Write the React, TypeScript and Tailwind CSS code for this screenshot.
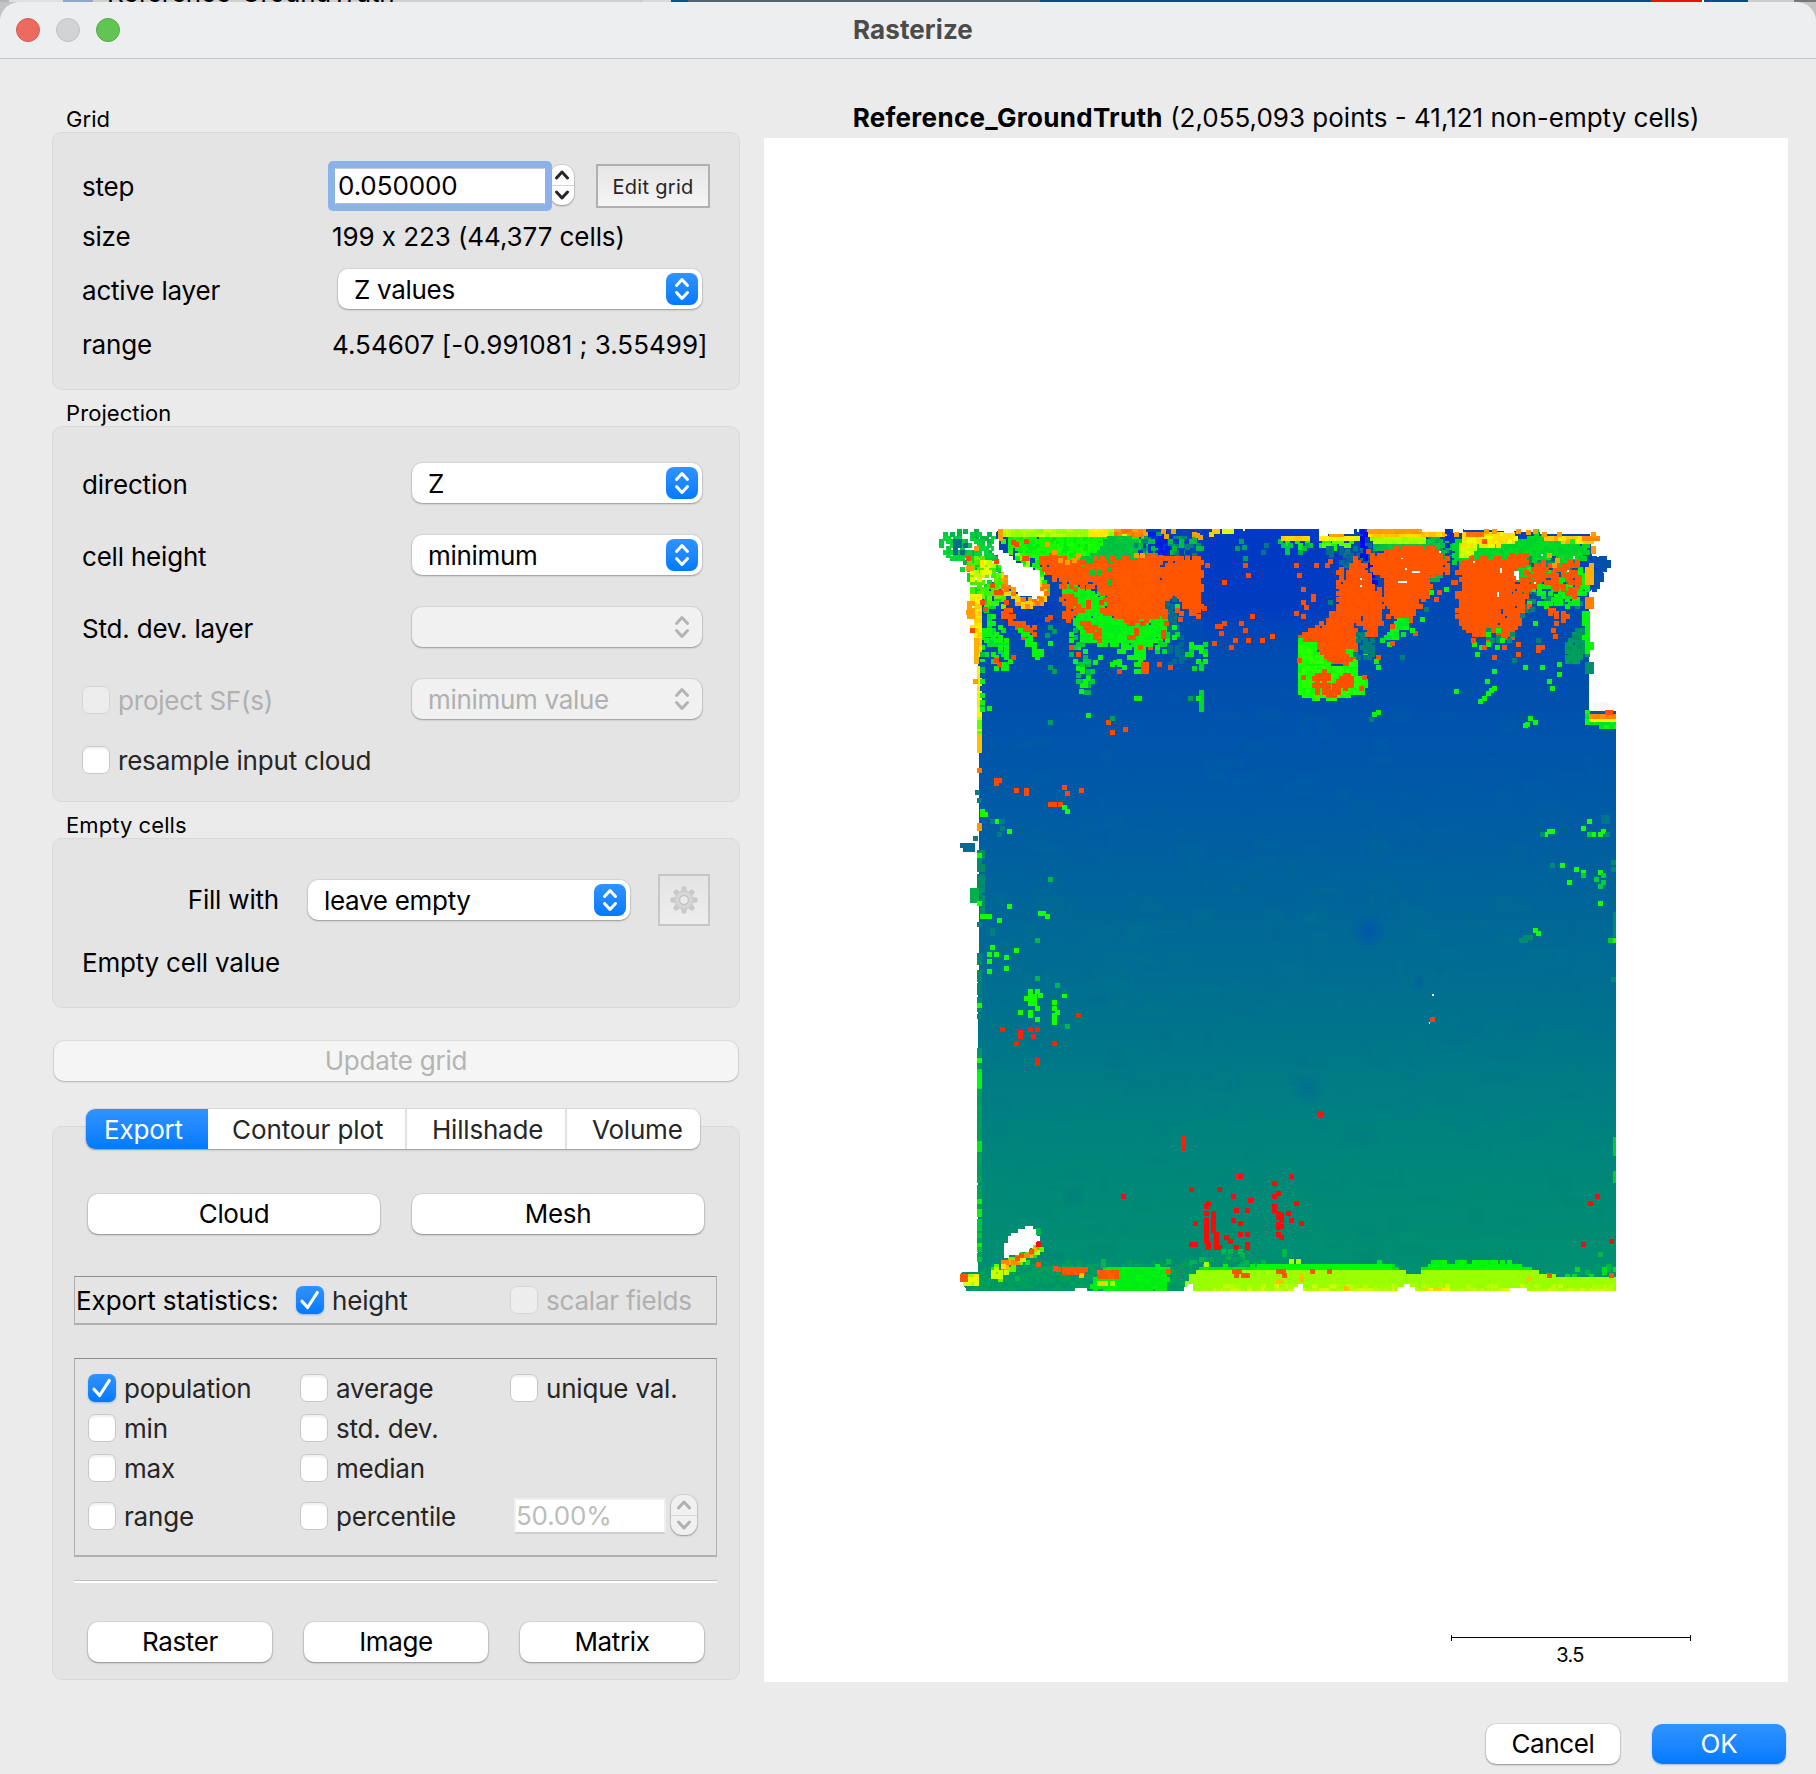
import React from "react";

/* ---------- controls ---------- */

function Chevrons({ color }: { color: string }) {
  return (
    <svg width="32" height="32" viewBox="0 0 32 32" fill="none" stroke={color} strokeWidth="3" strokeLinecap="round" strokeLinejoin="round">
      <path d="M10.5 12.5 16 6.5l5.5 6M10.5 19.5l5.5 6 5.5-6" />
    </svg>
  );
}

function Select({ value, className, disabled }: { value: string; className: string; disabled?: boolean }) {
  return (
    <div
      className={
        "flex h-10 items-center justify-between rounded-[10px] pl-4 pr-1 shadow-[0_0_0_1px_rgba(0,0,0,0.05),0_1px_2px_rgba(0,0,0,0.3)] " +
        (disabled ? "bg-[#f1f1f1] text-[#b0b0b0] " : "bg-white text-black ") +
        className
      }
    >
      <span className="pt-[2px] tracking-[-0.3px]">{value}</span>
      <div className={"size-8 rounded-lg " + (disabled ? "" : "bg-linear-to-b from-[#2f93ff] to-[#007aff]")}>
        <Chevrons color={disabled ? "#b3b3b3" : "#ffffff"} />
      </div>
    </div>
  );
}

function Check({ label, checked, disabled, className = "" }: { label: string; checked?: boolean; disabled?: boolean; className?: string }) {
  return (
    <div className={"flex items-center gap-2 " + className}>
      {checked ? (
        <div className="size-7 shrink-0 rounded-[7px] bg-linear-to-b from-[#2f93ff] to-[#007aff] shadow-[0_1px_2px_rgba(0,90,220,0.35)]">
          <svg width="28" height="28" viewBox="0 0 28 28" fill="none" stroke="#fff" strokeWidth="3.2" strokeLinecap="round" strokeLinejoin="round">
            <path d="M6 15.3l5.6 6.2L21.3 6.5" />
          </svg>
        </div>
      ) : (
        <div
          className={
            "size-7 shrink-0 rounded-[7px] border " +
            (disabled ? "border-[#d6d6d6] bg-[#ededed]" : "border-[#c8c8c8] bg-white shadow-[inset_0_2px_2px_rgba(0,0,0,0.06)]")
          }
        />
      )}
      <span className={"pt-[2px] " + (disabled ? "text-[#b0b0b0]" : "text-[#262626]")}>{label}</span>
    </div>
  );
}

function PushButton({ label, className }: { label: string; className: string }) {
  return (
    <div className={"flex h-10 items-center justify-center rounded-[10px] bg-white text-black tracking-[-0.35px] shadow-[0_0_0_1px_rgba(0,0,0,0.06),0_1px_2px_rgba(0,0,0,0.35)] " + className}>
      {label}
    </div>
  );
}

function Stepper({ disabled, className }: { disabled?: boolean; className: string }) {
  const c = disabled ? "#b0b0b0" : "#262626";
  return (
    <div
      className={
        "flex flex-col rounded-[11px] shadow-[0_0_0_1px_rgba(0,0,0,0.07),0_1px_2px_rgba(0,0,0,0.3)] " +
        (disabled ? "bg-[#f0f0f0] " : "bg-white ") +
        className
      }
    >
      <div className="flex flex-1 items-center justify-center border-b border-[#d5d5d5]">
        <svg width="16" height="10" viewBox="0 0 16 10" fill="none" stroke={c} strokeWidth="3" strokeLinecap="round" strokeLinejoin="round"><path d="M2.500 8 8 2l5.500 6" /></svg>
      </div>
      <div className="flex flex-1 items-center justify-center">
        <svg width="16" height="10" viewBox="0 0 16 10" fill="none" stroke={c} strokeWidth="3" strokeLinecap="round" strokeLinejoin="round"><path d="M2.500 2 8 8l5.500-6" /></svg>
      </div>
    </div>
  );
}

function Gear() {
  return (
    <svg width="30" height="30" viewBox="0 0 30 30" fill="none">
      {[0, 45, 90, 135, 180, 225, 270, 315].map((a) => (
        <path key={a} d="M12.800 1.500h4.400l1 6h-6.400z" fill="#c9c9c9" transform={`rotate(${a} 15 15)`} />
      ))}
      <circle cx="15" cy="15" r="9" fill="#d6d6d6" stroke="#cdcdcd" strokeWidth="1.500" />
      <circle cx="15" cy="15" r="4.500" fill="#ebebeb" stroke="#c4c4c4" strokeWidth="1.500" />
    </svg>
  );
}

/* ---------- height map ---------- */

type Pt = [number, number];
type Tile = { x: number; y: number; sx: number; sy: number };
type Field = { tile: Tile; poly: string; colors: string[]; density?: number; rough?: number };

const NW: Tile = { x: 920, y: 510, sx: 3, sy: 3 };
const NE: Tile = { x: 1270, y: 510, sx: 3, sy: 3 };
const SOUTH: Tile = { x: 920, y: 1160, sx: 2.227, sy: 3 };
const WEST: Tile = { x: 940, y: 770, sx: 3, sy: 3 };
const EAST: Tile = { x: 1320, y: 770, sx: 3, sy: 3 };

const CELL = 3.4167;

const OR = "#ff5500";
const GR = "#0cf50c";
const DG = "#00c040";
const YE = "#ffe600";
const LI = "#99ff00";
const AM = "#ffa000";
const WH = "#ffffff";

function toPoints(tile: Tile, s: string): Pt[] {
  return s.split(" ").map((p) => {
    const [a, b] = p.split(",").map(Number);
    return [tile.x + a / tile.sx, tile.y + b / tile.sy] as Pt;
  });
}

function inside(x: number, y: number, p: Pt[]) {
  let r = false;
  for (let i = 0, j = p.length - 1; i < p.length; j = i++) {
    const [xi, yi] = p[i];
    const [xj, yj] = p[j];
    if (yi > y !== yj > y && x < ((xj - xi) * (y - yi)) / (yj - yi) + xi) r = !r;
  }
  return r;
}

function random(seed: number) {
  let a = seed;
  return () => {
    a = (a + 0x6d2b79f5) | 0;
    let t = Math.imul(a ^ (a >>> 15), 1 | a);
    t = (t + Math.imul(t ^ (t >>> 7), 61 | t)) ^ t;
    return ((t ^ (t >>> 14)) >>> 0) / 4294967296;
  };
}

function fieldPaths(f: Field, seed: number) {
  const pts = toPoints(f.tile, f.poly);
  const rnd = random(seed * 7919 + 13);
  const xs = pts.map((p) => p[0]);
  const ys = pts.map((p) => p[1]);
  const x0 = Math.floor((Math.min(...xs) - 936) / CELL) - 1;
  const x1 = Math.ceil((Math.max(...xs) - 936) / CELL) + 1;
  const y0 = Math.floor((Math.min(...ys) - 529) / CELL) - 1;
  const y1 = Math.ceil((Math.max(...ys) - 529) / CELL) + 1;
  const rough = f.rough ?? 3;
  const out: Record<string, string> = {};
  for (let j = y0; j <= y1; j++) {
    for (let i = x0; i <= x1; i++) {
      const cx = 936 + (i + 0.5) * CELL;
      const cy = 529 + (j + 0.5) * CELL;
      const jx = (rnd() - 0.5) * 2 * rough;
      const jy = (rnd() - 0.5) * 2 * rough;
      if (!inside(cx + jx, cy + jy, pts) || rnd() > (f.density ?? 1)) continue;
      const c = f.colors[Math.floor(rnd() * f.colors.length)];
      out[c] = (out[c] ?? "") + `M${Math.round(936 + i * CELL)} ${Math.round(529 + j * CELL)}h5v5h-5z`;
    }
  }
  return Object.entries(out);
}

const OUTLINE =
  "970,560 972,545 990,535 998,530 1000,529 1270,529 1450,529 1590,534 1592,556 1606,558 1606,566 1598,585 1589,592 1589,711 1616,711 1616,1291 966,1291 960,1276 962,1272 978,1272 979,700 977,600 970,588";

const FIELDS: Field[] = [
  // north-west corner
  { tile: NW, poly: "40,30 230,30 225,75 230,200 165,270 150,255 130,200 40,140", colors: [WH], rough: 0 },
  { tile: NW, poly: "50,68 175,60 220,75 228,120 232,190 150,200 110,150 65,125", colors: ["#00cc3c", "#00d838", "#00b44c"], density: 0.62 },
  { tile: NW, poly: "95,85 130,90 130,122 95,118", colors: ["#00708c"], density: 0.6 },
  { tile: NW, poly: "140,135 235,150 245,200 260,240 245,285 190,290 150,250", colors: ["#3cf000", "#66f500", "#00dc28", "#5ae800"], density: 0.85 },
  { tile: NW, poly: "150,200 195,135 215,160 180,220", colors: ["#e6ff00", "#b4ff00", YE], density: 0.7 },
  { tile: NW, poly: "240,80 440,70 690,75 690,110 560,135 480,165 380,160 300,130", colors: ["#10fa00", "#00ee10", "#20ff00"] },
  { tile: NW, poly: "245,57 450,57 640,57 640,74 540,80 245,78", colors: ["#b4ff00", "#c8ff00", "#96ff00"], rough: 1 },
  { tile: NW, poly: "510,57 560,57 560,78 510,78", colors: ["#ffe600", "#fff000"], rough: 1 },
  { tile: NW, poly: "580,57 680,57 680,76 580,74", colors: [AM, "#ff8800", "#ff7000"], rough: 1 },
  { tile: NW, poly: "480,150 560,100 640,95 690,105 720,115 720,160 560,200 500,190 480,180", colors: [DG, "#00c83c", "#00c23e"] },
  { tile: NW, poly: "540,85 640,80 690,90 690,110 560,110", colors: [DG, "#00c83c"], density: 0.95 },
  { tile: NW, poly: "680,70 820,75 848,100 848,140 740,135 650,120", colors: ["#00906e", "#00a05a", "#0038cc", "#00807e", "#00bb44"], density: 0.7 },
  { tile: NW, poly: "690,75 740,75 740,125 710,125", colors: ["#001ee0"], density: 0.6 },
  { tile: NW, poly: "232,57 246,57 246,90 232,90", colors: [AM], rough: 0 },
  { tile: NW, poly: "255,110 300,135 370,170 385,240 360,270 350,190 300,160", colors: ["#40f000", "#10f000", "#a0ff00"], density: 0.9 },
  { tile: NW, poly: "185,310 300,290 400,270 410,330 280,350 190,330", colors: ["#003cbc", "#0040b8"], density: 0.7 },
  { tile: NW, poly: "415,235 460,210 545,250 570,320 740,300 735,380 660,400 540,410 480,390 450,290", colors: [GR, "#00f018"], density: 0.98 },
  { tile: NW, poly: "350,145 400,128 495,160 540,140 575,150 640,142 715,132 725,190 760,250 735,325 690,325 640,335 590,320 545,310 560,270 520,225 450,230 400,205", colors: [OR, OR, "#ff5a00"], rough: 4 },
  { tile: NW, poly: "730,140 846,140 846,285 830,315 800,290 760,250 725,205", colors: [OR], density: 0.97, rough: 2 },
  { tile: NW, poly: "500,180 560,170 590,225 550,235", colors: ["#00c83c"], density: 0.3 },
  { tile: NW, poly: "740,260 765,280 775,370 795,450 750,470 740,360", colors: ["#00708c", "#006a90"], density: 0.6 },
  { tile: NW, poly: "425,250 455,250 485,300 470,328 425,320", colors: [OR], density: 0.85 },
  { tile: NW, poly: "470,330 500,330 545,375 530,390", colors: [OR], density: 0.85, rough: 2 },
  { tile: NW, poly: "250,290 275,290 290,330 350,360 335,405 300,370 250,320", colors: [OR], density: 0.7, rough: 2 },
  { tile: NW, poly: "190,290 225,320 260,400 265,490 240,490 190,430", colors: [GR, "#00e030"], density: 0.5 },
  { tile: NW, poly: "300,350 335,380 370,430 355,445 315,395", colors: [GR], density: 0.75, rough: 2 },
  { tile: NW, poly: "435,350 470,350 500,430 540,545 520,550 480,545 460,450", colors: [GR, "#00d038", "#00b850"], density: 0.38 },
  { tile: NW, poly: "560,400 670,380 670,490 580,490", colors: [GR], density: 0.22 },
  { tile: NW, poly: "640,390 675,390 670,450 650,450", colors: [GR], density: 0.95, rough: 2 },
  { tile: NW, poly: "560,360 760,350 760,400 600,420", colors: [OR, GR], density: 0.16 },
  { tile: NW, poly: "680,370 765,370 750,430 685,420", colors: [GR, "#00d830"], density: 0.35 },
  { tile: NW, poly: "795,405 855,405 850,495 800,440", colors: [GR, "#00dc28"], density: 0.45 },
  { tile: NW, poly: "832,540 847,540 847,605 836,605", colors: ["#00d830"], rough: 1 },
  { tile: NW, poly: "660,455 685,455 685,490 660,490", colors: [OR], rough: 0 },
  { tile: NW, poly: "765,285 840,285 860,340 800,320", colors: [GR, OR], density: 0.25 },
  { tile: NW, poly: "150,255 181,255 183,430 162,440 157,330", colors: [YE, "#fff000", "#ffd000"], density: 0.97, rough: 1 },
  { tile: NW, poly: "140,270 158,270 158,320 140,320", colors: [AM], density: 0.9, rough: 0 },
  { tile: NW, poly: "160,385 175,385 172,455 160,455", colors: ["#ffb000"], rough: 0 },
  { tile: NW, poly: "171,465 185,465 185,625 171,625", colors: [YE, "#fff500"], rough: 0 },
  { tile: NW, poly: "171,625 185,625 185,670 171,670", colors: ["#60ff00", "#c0ff00"], rough: 0 },
  { tile: NW, poly: "171,670 185,670 185,725 171,725", colors: ["#ffc000"], rough: 0 },
  { tile: NW, poly: "186,430 195,430 195,600 186,600", colors: [GR, "#0058a4", "#00c040"], density: 0.7, rough: 0 },
  { tile: NW, poly: "235,170 265,190 270,240 310,265 345,265 365,220 380,220 380,265 345,285 300,290 250,240", colors: [AM, "#ff7800", "#ff8c00", "#ffd000"], density: 0.9, rough: 2 },
  { tile: NW, poly: "226,70 230,110 298,162 355,185 361,250 340,258 300,248 270,223 258,188 238,163 223,120", colors: [WH], rough: 0 },
  // north-east
  { tile: NE, poly: "-40,90 -10,90 -10,125 -40,125", colors: ["#007888"], density: 0.4 },
  { tile: NE, poly: "20,85 120,88 115,128 50,128", colors: ["#00c840", "#10f010", "#00b050"], density: 0.7 },
  { tile: NE, poly: "30,78 113,78 113,90 30,90", colors: ["#ffc800", "#ffd800"], rough: 0 },
  { tile: NE, poly: "145,90 270,90 200,112 150,105", colors: ["#10ff00", "#60ff00"], density: 0.9, rough: 2 },
  { tile: NE, poly: "145,78 268,78 268,88 145,88", colors: ["#d0ff00", "#fff000"], rough: 0 },
  { tile: NE, poly: "175,67 222,67 222,77 175,77", colors: [AM], rough: 0 },
  { tile: NE, poly: "160,115 300,100 310,150 240,190 200,160", colors: ["#006c90", "#006498", "#007888"], density: 0.6 },
  { tile: NE, poly: "310,92 550,80 545,180 490,215 320,130", colors: [DG, "#00b44c", "#009e60"], density: 0.85 },
  { tile: NE, poly: "320,92 540,92 540,108 320,118", colors: ["#00cc40", "#00c040"], rough: 2 },
  { tile: NE, poly: "300,80 465,80 465,93 310,93", colors: ["#b0ff00", "#90ff00"], rough: 0 },
  { tile: NE, poly: "290,66 525,66 525,79 290,79", colors: ["#ffd800", "#ffe000", "#ffc000"], rough: 0 },
  { tile: NE, poly: "290,57 452,57 452,68 290,68", colors: ["#ffa000", "#ff9800"], rough: 0 },
  { tile: NE, poly: "270,60 286,60 288,140 318,140 322,228 300,228 305,190 285,190", colors: ["#0008f0", "#0010f0"], density: 0.6, rough: 2 },
  { tile: NE, poly: "528,60 546,60 546,90 530,120", colors: ["#0030d0"], density: 0.8, rough: 1 },
  { tile: NE, poly: "530,130 555,120 550,200 520,200", colors: ["#0048b4"], density: 0.6 },
  { tile: NE, poly: "545,90 740,90 800,65 830,80 955,110 950,135 880,170 760,230 700,160 560,165", colors: ["#00d828", "#00d22c", "#00dc24"] },
  { tile: NE, poly: "565,100 620,95 600,140 565,140", colors: ["#b4ff00", "#d8ff00"], density: 0.97, rough: 1 },
  { tile: NE, poly: "575,68 738,66 736,93 660,105 575,103", colors: ["#ffe000", "#ffd800", "#f0ff00"], rough: 1 },
  { tile: NE, poly: "585,66 638,66 638,80 585,80", colors: ["#ff7000"], rough: 0 },
  { tile: NE, poly: "810,78 970,78 965,97 880,95", colors: ["#ffa800", "#ffc800", "#ffe800"], rough: 1 },
  { tile: NE, poly: "935,78 982,78 982,92 935,90", colors: ["#ff8800"], density: 0.9, rough: 0 },
  { tile: NE, poly: "960,142 1005,140 1015,160 1005,175 990,215 965,245", colors: ["#0050ac"], density: 0.85, rough: 1 },
  { tile: NE, poly: "775,150 930,150 950,240 920,290 810,285 770,310 740,350", colors: ["#0050a8", "#00906c", GR], density: 0.5 },
  { tile: NE, poly: "310,130 380,115 480,110 525,145 525,185 475,200 475,245 440,290 420,325 370,325 345,280 340,200 305,190", colors: [OR], rough: 3 },
  { tile: NE, poly: "195,170 215,165 218,215 248,150 290,165 300,220 335,250 330,330 320,370 300,385 280,350 275,310 255,340 260,430 250,520 230,530 205,450 165,460 130,400 82,385 82,365 150,345 195,300 208,240", colors: [OR, "#ff5000"], rough: 3 },
  { tile: NE, poly: "82,390 125,392 150,435 180,465 240,470 260,430 260,490 286,510 280,545 200,565 120,565 84,550", colors: ["#14ff00", "#08fa08", "#28ff00"], rough: 1 },
  { tile: NE, poly: "132,487 178,487 175,530 200,515 215,480 250,500 250,530 215,540 190,560 165,560 132,530", colors: ["#ff5000"], density: 0.85, rough: 2 },
  { tile: NE, poly: "215,320 235,350 250,400 215,430", colors: [GR], density: 0.15 },
  { tile: NE, poly: "240,420 290,430 285,465 245,470", colors: [GR, "#007888"], density: 0.4 },
  { tile: NE, poly: "262,370 320,390 300,450 270,430", colors: ["#008078"], density: 0.4 },
  { tile: NE, poly: "385,325 420,325 415,365 350,405 328,400", colors: [GR, "#00e824"], density: 0.8, rough: 2 },
  { tile: NE, poly: "550,170 605,140 700,145 770,130 770,160 735,180 720,260 700,290 690,330 640,375 600,370 570,340 562,250 575,210", colors: [OR], rough: 3 },
  { tile: NE, poly: "735,230 815,140 830,190 780,250 750,330 720,380 690,395 675,330 700,300", colors: [OR], density: 0.95 },
  { tile: NE, poly: "810,215 930,175 952,240 918,285 820,280", colors: [GR, "#00ee14"], density: 0.65 },
  { tile: NE, poly: "815,180 925,145 935,220 910,265 860,230 800,210", colors: [OR], density: 0.65 },
  { tile: NE, poly: "840,290 915,310 880,360 845,360", colors: [OR], density: 0.4 },
  { tile: NE, poly: "640,350 700,350 735,380 650,400", colors: [GR, "#009070", OR], density: 0.5 },
  { tile: NE, poly: "620,385 665,385 620,435", colors: [GR, "#007888"], density: 0.4 },
  { tile: NE, poly: "895,370 945,330 952,430 905,460 880,450", colors: ["#009868", "#00a05c", "#009060"], density: 0.95 },
  { tile: NE, poly: "930,170 955,200 955,245 935,235", colors: [GR], density: 0.7, rough: 1 },
  { tile: NE, poly: "937,305 953,305 961,375 961,425 945,425", colors: ["#00fa08", GR], rough: 1 },
  { tile: NE, poly: "950,165 962,160 962,222 950,222", colors: ["#ffb000"], rough: 0 },
  { tile: NE, poly: "950,262 962,262 962,295 950,295", colors: ["#ff8000"], rough: 0 },
  { tile: NE, poly: "950,455 962,455 962,487 950,487", colors: ["#00906c"], rough: 0 },
  { tile: NE, poly: "942,600 960,606 1036,625 1036,652 1012,648 942,644", colors: ["#10ff00", "#00e428"], rough: 0 },
  { tile: NE, poly: "952,622 1036,622 1036,633 952,633", colors: ["#fff000", "#ccff00"], rough: 0 },
  { tile: NE, poly: "952,608 1036,608 1036,622 952,622", colors: ["#ff9000", "#ff8400"], rough: 0 },
  // southern edge
  { tile: SOUTH, poly: "135,320 400,310 620,310 600,390 110,390", colors: ["#00a05c", "#009c60", "#009468"], density: 0.97 },
  { tile: SOUTH, poly: "560,300 760,275 760,320 600,330", colors: ["#00a458", "#009468", "#00b44c"], density: 0.4 },
  { tile: SOUTH, poly: "395,345 420,320 553,318 545,390 372,390", colors: ["#00f010", "#00f80c", "#00ec14"], rough: 1 },
  { tile: SOUTH, poly: "620,318 1050,307 1070,335 615,332", colors: ["#00e41c", "#00f010"], density: 0.9, rough: 1 },
  { tile: SOUTH, poly: "750,307 1045,307 1045,327 750,327", colors: ["#00fa08"], rough: 0 },
  { tile: SOUTH, poly: "1115,325 1145,303 1325,307 1365,330 1115,335", colors: ["#00fa08", "#00f010"], rough: 1 },
  { tile: SOUTH, poly: "1410,330 1550,315 1550,350 1440,345", colors: ["#00b848", "#00e020", "#009868"], density: 0.6 },
  { tile: SOUTH, poly: "620,328 1065,328 1095,347 1125,330 1350,330 1430,350 1555,352 1555,392 590,392 598,350", colors: [LI, "#96ff00", "#a0ff00"], rough: 0 },
  { tile: SOUTH, poly: "650,377 1555,378 1555,390 650,390", colors: ["#b8ff00", "#d0ff00", "#a8ff00"], density: 0.85, rough: 1 },
  { tile: SOUTH, poly: "1120,378 1180,378 1180,390 1120,390", colors: ["#ffd000", "#fff000"], rough: 0 },
  { tile: SOUTH, poly: "390,372 440,350 430,368", colors: ["#b0ff00", "#ffc800"], rough: 1 },
  { tile: SOUTH, poly: "300,320 370,318 363,345 325,343", colors: [OR], density: 0.9, rough: 1 },
  { tile: SOUTH, poly: "394,328 436,328 436,348 394,348", colors: [OR, "#ff6000"], rough: 0 },
  { tile: SOUTH, poly: "160,320 265,250 268,275 200,330 175,362 153,350", colors: ["#66f500", "#c8ff00", "#10e820"], density: 0.95, rough: 2 },
  { tile: SOUTH, poly: "175,308 240,275 262,240 268,248 248,285 190,320", colors: ["#ffb400", "#ffe000", "#ff8800"], density: 0.95, rough: 1 },
  { tile: SOUTH, poly: "100,342 125,338 125,370 108,380 98,365", colors: ["#e6ff00", YE, LI], density: 0.9, rough: 1 },
  { tile: SOUTH, poly: "90,340 103,340 103,358 90,358", colors: [OR], rough: 0 },
  { tile: SOUTH, poly: "238,198 258,212 261,235 238,266 203,280 185,300 185,262 206,220", colors: [WH], rough: 0 },
  // western and eastern rims
  { tile: WEST, poly: "112,240 128,240 128,450 118,450 118,400 92,395 92,360 110,350", colors: ["#008c70", "#008474", "#009060"], density: 0.85, rough: 0 },
  { tile: WEST, poly: "92,358 110,352 112,392 92,392", colors: ["#00b04c"], rough: 0 },
  { tile: WEST, poly: "60,220 102,220 108,232 90,246 70,238", colors: ["#006c90"], rough: 0 },
  { tile: WEST, poly: "112,545 122,545 122,740 112,740", colors: ["#008478", "#008c70"], density: 0.8, rough: 0 },
  { tile: WEST, poly: "112,820 124,820 124,895 112,895", colors: ["#009868"], density: 0.85, rough: 0 },
  { tile: WEST, poly: "112,895 124,895 124,955 112,955", colors: ["#00e81c", "#00f810"], rough: 0 },
  { tile: WEST, poly: "112,960 124,960 124,1230 112,1230", colors: ["#009c60", "#00a458"], rough: 0 },
  { tile: WEST, poly: "112,1110 124,1110 124,1140 112,1140", colors: ["#00e81c"], rough: 0 },
  { tile: WEST, poly: "116,1230 126,1230 126,1470 116,1470", colors: ["#00a458", "#00c83c", "#10f010"], density: 0.9, rough: 0 },
  { tile: WEST, poly: "112,156 124,156 124,178 112,178", colors: ["#ff9800"], rough: 0 },
  { tile: WEST, poly: "264,668 284,668 282,700 266,700", colors: ["#14ff00"], rough: 0 },
  { tile: EAST, poly: "875,425 885,425 885,500 875,500", colors: ["#008c70"], rough: 0 },
  { tile: EAST, poly: "875,1098 885,1098 885,1150 875,1150", colors: ["#00cc38"], rough: 0 },
  { tile: EAST, poly: "875,1200 885,1200 885,1230 875,1230", colors: ["#00cc38"], rough: 0 },
];

const MARKS: { tile: Tile; color: string; at: string }[] = [
  { tile: NW, color: "#ff4800", at: "558,630 570,660 609,651 222,804 230,804 222,812 282,834 312,834 312,842 426,825 435,843 477,834 384,876 395,876 414,876 855,159 969,159 978,189 906,210 990,312 957,333 969,354 886,342 895,342 906,333 897,363 876,393 927,405 939,384 978,384 1020,384 1050,372 222,444 231,456 273,435 447,405 468,426 592,477 711,456 744,465 498,270 498,283 537,270 732,333 642,354 642,363 723,360 723,372 630,333 660,333 375,320 384,314 252,270 180,270 189,291 150,354 138,138 210,220 222,240 234,240 274,90 282,96 312,88 312,138 222,147 306,138 775,321 845,288" },
  { tile: NW, color: "#ff9c00", at: "375,96 397,120 414,144 435,150 456,144 468,130 642,130 660,130 724,58 732,72 752,58 816,65 825,68 835,75 138,168 147,168 162,108 273,230 159,507 138,300" },
  { tile: NW, color: "#0cf50c", at: "642,558 650,558 498,609 606,465 477,537 828,558 579,450 534,435 519,450 384,393 200,588" },
  { tile: NW, color: "#00a05c", at: "384,630 384,465 396,477 570,618 804,558 384,345 396,357 375,370 969,138 957,87 945,108 966,105" },
  { tile: NW, color: "#ffd000", at: "867,66 876,57 886,57" },
  { tile: NW, color: "#dcff00", at: "905,57 915,57 928,57" },
  { tile: NW, color: "#ff7800", at: "171,774" },
  { tile: NE, color: "#ff5000", at: "72,159 81,189 93,231 123,252 123,261 93,270 102,285 72,303 93,312 0,372 132,159 174,147 165,160 288,118 492,118 492,262 501,240 429,363 360,393 327,333 348,312 360,342 603,384 636,405 666,435 696,405 738,426 798,405 809,405 798,414 849,372 81,444 93,495 318,435 276,495 267,528 636,87 1005,600 1013,600 550,210 543,210 738,396" },
  { tile: NE, color: "#0cf50c", at: "666,477 645,507 657,535 666,528 648,543 636,558 624,567 759,465 810,465 861,456 861,486 831,507 840,528 552,537 774,618 789,630 765,636 760,640 318,600 306,606 318,465 312,447 477,240 522,231 450,321 420,354 789,333 615,426 676,405 900,87" },
  { tile: NE, color: "#008078", at: "390,435 462,291 225,118 174,270 726,444 798,384 780,291 750,309 297,620" },
  { tile: NE, color: "#ff9c00", at: "738,57 768,60 789,57 861,67 963,67 552,67 642,57 666,57 816,67 831,129 855,144 963,108 963,116 847,160" },
  { tile: WEST, color: "#ff2200", at: "408,730 180,771 234,780 234,792 264,771 285,771 273,792 222,813 336,813 285,864 285,872 723,1098 723,1112 723,1128 888,1212" },
  { tile: WEST, color: "#14ff00", at: "366,105 375,117 120,117 120,125 129,125 162,147 201,177 201,402 303,423 315,432 294,423 120,432 132,432 140,432 171,444 150,525 141,546 162,546 141,567 141,597 192,555 192,588 222,534 264,657 285,657 294,669 252,678 285,708 264,720 264,728 234,720 285,741 336,690 336,708 345,720 336,730 336,742 336,749 366,669 111,700 111,393 111,250 111,864" },
  { tile: WEST, color: "#00b84c", at: "324,321 285,504 285,618 345,639 375,762" },
  { tile: WEST, color: "#007e80", at: "180,147 171,186 180,168 150,147 150,475 150,482 360,762 366,657 99,198 111,455 105,60 111,85" },
  { tile: EAST, color: "#14ff00", at: "801,147 783,168 843,177 834,186 813,186 720,279 762,291 783,300 834,300 741,330 834,393 639,474 648,483 873,504 681,177 690,177 669,186" },
  { tile: EAST, color: "#00d038", at: "783,308 822,321 843,309 843,330 834,342 864,504 801,186" },
  { tile: EAST, color: "#008c70", at: "597,504 609,495 609,504 624,495 690,279 855,186 660,186 873,270 873,290 873,620" },
  { tile: EAST, color: "#00748c", at: "843,135 855,135 843,147 855,147" },
  { tile: EAST, color: "#ff4000", at: "330,741" },
  { tile: EAST, color: "#ff1000", at: "-6,1026" },
  { tile: SOUTH, color: "#fa0a0a", at: "708,42 822,42 784,63 600,81 661,81 793,93 784,102 692,102 730,114 832,123 448,102 784,132 784,144 638,124 632,132 632,153 700,144 724,144 793,153 800,160 793,165 800,175 793,185 800,193 793,195 815,153 822,174 844,183 648,153 648,165 648,177 648,190 648,203 632,174 632,186 632,198 632,210 632,222 632,236 609,183 692,174 708,183 708,216 724,216 654,216 654,230 654,244 676,225 686,237 793,216 800,225 600,246 609,246 638,246 638,255 654,255 661,255 700,255 724,246 724,255 1503,102 1488,123 1472,246 1534,237 258,246" },
  { tile: SOUTH, color: "#ff5500", at: "258,306 547,327 694,327 706,327 700,340 715,340 724,340 793,327 804,327 806,340 868,327 907,327 1396,339 1534,339 211,288 243,267 220,280 296,318" },
  { tile: SOUTH, color: "#ffc000", at: "793,357 800,357 844,339 355,340 1351,348 945,378 844,352" },
  { tile: SOUTH, color: "#aaff00", at: "822,297 838,297 632,306" },
  { tile: SOUTH, color: "#00b84c", at: "806,267 806,276 671,267 686,267 708,267 1510,276 258,204 258,210 211,348 402,297 402,309 622,290 547,297" },
];

const GAPS = [
  [1412, 571, 8, 2], [1398, 581, 9, 2], [1401, 558, 2, 1], [1405, 568, 2, 2], [1514, 571, 5, 5], [1516, 576, 3, 4], [1497, 592, 2, 5], [1500, 568, 2, 5],
  [1360, 578, 2, 2], [1360, 585, 2, 2], [1439, 551, 2, 2], [1473, 561, 2, 2], [1534, 582, 2, 2], [1541, 554, 2, 2], [1573, 556, 2, 3], [1567, 570, 2, 2],
  [1432, 994, 2, 2], [1429, 1022, 1, 2],
  [1075, 1288, 12, 3], [1187, 1284, 6, 3], [1184, 1287, 9, 4], [1298, 1284, 5, 3], [1294, 1287, 9, 4], [1404, 1284, 6, 3], [1398, 1287, 17, 4], [1510, 1288, 17, 3],
  [960, 1288, 6, 4], [970, 529, 4, 2], [992, 529, 5, 3], [1243, 529, 2, 2], [1319, 529, 35, 5], [1319, 534, 9, 2], [1357, 529, 2, 3], [1422, 529, 23, 3], [1453, 529, 10, 4],
  [1504, 529, 10, 4], [1540, 529, 17, 5], [1562, 529, 27, 5],
];

function squares(tile: Tile, at: string) {
  return toPoints(tile, at).map(([x, y]) => `M${Math.round(x)} ${Math.round(y)}h5v5h-5z`).join("");
}

function texture() {
  const rnd = random(4242);
  const out: { x: number; y: number; w: number; h: number; c: string }[] = [];
  for (let k = 0; k < 700; k++) {
    const w = 4 + Math.floor(rnd() * 9) * 3;
    const h = 4 + Math.floor(rnd() * 5) * 3;
    out.push({
      x: Math.round(984 + rnd() * (1610 - 984 - w)),
      y: Math.round(690 + rnd() * (1255 - 690)),
      w,
      h,
      c: rnd() > 0.5 ? "#00a070" : "#0050b0",
    });
  }
  return out;
}

function HeightMap() {
  return (
    <svg className="block" width="1024" height="1544" viewBox="764 138 1024 1544" shapeRendering="crispEdges">
      <defs>
        <linearGradient id="height" gradientUnits="userSpaceOnUse" x1="0" y1="529" x2="0" y2="1291">
          <stop offset="0" stopColor="#0042ba" />
          <stop offset="0.120" stopColor="#004ab4" />
          <stop offset="0.330" stopColor="#0058a8" />
          <stop offset="0.480" stopColor="#00659a" />
          <stop offset="0.620" stopColor="#00708f" />
          <stop offset="0.760" stopColor="#007f82" />
          <stop offset="0.880" stopColor="#008a76" />
          <stop offset="1" stopColor="#009170" />
        </linearGradient>
        <linearGradient id="deep" x1="0" y1="0" x2="0" y2="1">
          <stop offset="0" stopColor="#0038c6" stopOpacity="0.9" />
          <stop offset="0.600" stopColor="#0038c4" stopOpacity="0.75" />
          <stop offset="1" stopColor="#0044b8" stopOpacity="0" />
        </linearGradient>
        <radialGradient id="dip">
          <stop offset="0" stopColor="#0050b0" stopOpacity="0.75" />
          <stop offset="1" stopColor="#0050b0" stopOpacity="0" />
        </radialGradient>
        <clipPath id="extent">
          <rect x="930" y="529" width="686" height="762" />
        </clipPath>
      </defs>
      <g clipPath="url(#extent)">
        <polygon points={OUTLINE} fill="url(#height)" />
        <rect x="1203" y="529" width="140" height="130" fill="url(#deep)" />
        {texture().map((t, i) => (
          <rect key={i} x={t.x} y={t.y} width={t.w} height={t.h} fill={t.c} opacity={0.035} />
        ))}
        <rect x="1351" y="912" width="36" height="38" fill="url(#dip)" />
        <rect x="1290" y="1072" width="36" height="36" fill="url(#dip)" opacity="0.35" />
        <rect x="1412" y="974" width="14" height="16" fill="url(#dip)" opacity="0.7" />
        {FIELDS.map((f, i) => (
          <g key={i}>
            {fieldPaths(f, i + 1).map(([c, d]) => (
              <path key={c} d={d} fill={c} />
            ))}
          </g>
        ))}
        {GAPS.map(([x, y, w, h], i) => (
          <rect key={i} x={x} y={y} width={w} height={h} fill="#fff" />
        ))}
        {MARKS.map((m, i) => (
          <path key={i} d={squares(m.tile, m.at)} fill={m.color} />
        ))}
      </g>
      <path d="M1451.500 1635v6M1690.500 1635v6M1451 1637.500h240" stroke="#000" strokeWidth="1" />
      <text x="1570" y="1662" textAnchor="middle" fontSize="20" letterSpacing="-0.6" fill="#000">3.5</text>
    </svg>
  );
}

/* ---------- window ---------- */

function Caption({ children, className }: { children: string; className: string }) {
  return <div className={"flex items-center pl-[14px] text-[22px] tracking-[0.08px] " + className}>{children}</div>;
}

const GROUP = "rounded-[10px] border border-[#d9d9d9] bg-[#e4e4e4]";

export default function App() {
  return (
    <div className="h-[1774px] w-[1816px] overflow-hidden bg-[#c4c4c4] font-['Inter','Liberation_Sans',sans-serif] text-[26px] leading-none tracking-[-0.2px] whitespace-nowrap text-black">
      <div className="flex h-[2px] overflow-hidden">
        <div className="w-[9px] bg-[#b5b5b5]" />
        <div className="w-[54px] bg-[#e0e0e0]" />
        <div className="w-[30px] bg-[#8fa8c8]" />
        <div className="flex w-[550px] items-end bg-[#cfcfcf] pl-[14px]">
          <span className="translate-y-[4px]">Reference_GroundTruth</span>
        </div>
        <div className="w-[28px] bg-[#dadada]" />
        <div className="w-[17px] bg-[#00558c]" />
        <div className="w-[352px] bg-[#56646e]" />
        <div className="w-[611px] bg-[#00517f]" />
        <div className="w-[51px] bg-[#f01000]" />
        <div className="w-[46px] border-l-2 border-white bg-[#00517f]" />
        <div className="w-[46px] bg-[#cccccc]" />
        <div className="flex-1 bg-[#777777]" />
      </div>
      <div className="h-[1772px] overflow-hidden rounded-t-[20px] bg-[#ebebeb]">
        <div className="flex h-[57px] items-center border-b border-[#c4c5c6] bg-[#edeeef]">
          <div className="flex w-[853px] gap-4 pl-4">
            <div className="size-6 rounded-full border border-[#d85a50] bg-[#ed6a5f]" />
            <div className="size-6 rounded-full border border-[#c0c0c2] bg-[#d2d3d5]" />
            <div className="size-6 rounded-full border border-[#52a843] bg-[#61c554]" />
          </div>
          <div className="-mt-px text-[26px] font-bold tracking-[0.1px] text-[#4b4b4b]">Rasterize</div>
        </div>

        <div className="flex">
          {/* settings column */}
          <div className="ml-[52px] w-[688px] pt-[47px]">
            <Caption className="h-[26px]">Grid</Caption>
            <div className={GROUP + " h-[258px] pt-7 pl-[29px]"}>
              <div className="flex h-[50px] items-center">
                <div className="w-[246px] pt-[2px]">step</div>
                <div className="z-10 h-[50px] w-[224px] rounded-[5px] bg-[#8cb3e9] p-[7px]">
                  <div className="flex h-9 items-center border border-t-[#c8c8c8] border-r-white border-b-[#bbb] border-l-white bg-white pl-[2px] tracking-[-0.1px]">0.050000</div>
                </div>
                <Stepper className="-mt-[2px] -ml-[2px] h-10 w-6" />
                <div className="ml-[22px] flex h-11 w-[114px] items-center justify-center border-2 border-[#b0b0b0] bg-linear-to-b from-[#e6e6e6] to-[#f5f5f5] pt-[2px] text-[20px] tracking-[0.3px] text-[#262626]">
                  Edit grid
                </div>
              </div>
              <div className="flex h-[51px] items-center pt-px">
                <div className="w-[250px]">size</div>
                <div className="tracking-[-0.08px]">199 x 223 (44,377 cells)</div>
              </div>
              <div className="-mt-px flex h-[55px] items-center">
                <div className="w-[256px] pt-1">active layer</div>
                <Select className="w-[364px]" value="Z values" />
              </div>
              <div className="mt-px flex h-[55px] items-center pt-px">
                <div className="w-[250px]">range</div>
                <div className="tracking-[0.01px]">4.54607 [-0.991081 ; 3.55499]</div>
              </div>
            </div>

            <Caption className="mt-[10px] h-[26px]">Projection</Caption>
            <div className={GROUP + " h-[376px] pt-5 pl-[29px]"}>
              <div className="flex h-[72px] items-center">
                <div className="w-[330px] pt-[3px]">direction</div>
                <Select className="w-[290px]" value="Z" />
              </div>
              <div className="flex h-[72px] items-center">
                <div className="w-[330px] pt-[3px]">cell height</div>
                <Select className="w-[290px]" value="minimum" />
              </div>
              <div className="flex h-[72px] items-center">
                <div className="w-[330px] pt-[3px]">Std. dev. layer</div>
                <Select className="w-[290px]" value="" disabled />
              </div>
              <div className="flex h-[72px] items-center">
                <Check className="w-[330px] pt-[2px]" label="project SF(s)" disabled />
                <Select className="w-[290px]" value="minimum value" disabled />
              </div>
              <div className="flex h-12 items-center pt-[2px]">
                <Check label="resample input cloud" />
              </div>
            </div>

            <Caption className="mt-[10px] h-[26px]">Empty cells</Caption>
            <div className={GROUP + " h-[170px] pt-[35px] pl-[29px]"}>
              <div className="flex h-[52px] items-center">
                <div className="w-[197px] text-right">Fill with</div>
                <Select className="-mt-px ml-[29px] w-[322px]" value="leave empty" />
                <div className="ml-7 flex size-[52px] items-center justify-center border-2 border-[#c6c6c6] bg-linear-to-b from-[#e4e4e4] to-[#eee]">
                  <Gear />
                </div>
              </div>
              <div className="flex h-[73px] items-center">Empty cell value</div>
            </div>

            <div className="mx-[2px] mt-[33px] flex h-10 items-center justify-center rounded-[10px] bg-[#f5f5f5] text-[#b4b4b4] shadow-[0_0_0_1px_rgba(0,0,0,0.05),0_1px_2px_rgba(0,0,0,0.2)]">
              Update grid
            </div>

            <div className={GROUP + " mt-[45px] h-[554px]"}>
              <div className="-mt-[18px] ml-[33px] flex h-10 w-[614px] overflow-hidden rounded-[9px] bg-white pt-0 text-[#262626] shadow-[0_0_0_1px_rgba(0,0,0,0.06),0_1px_2px_rgba(0,0,0,0.3)]">
                <div className="flex w-[122px] items-center bg-linear-to-b from-[#2f93ff] to-[#007aff] pt-px pl-[18px] text-white">Export</div>
                <div className="flex w-[199px] items-center border-r-2 border-[#e2e2e2] pt-px pl-6 tracking-[-0.1px]">Contour plot</div>
                <div className="flex w-[160px] items-center border-r-2 border-[#e2e2e2] pt-px pl-[25px]">Hillshade</div>
                <div className="flex items-center pt-px pl-[25px]">Volume</div>
              </div>

              <div className="mt-[45px] ml-[35px] flex gap-8">
                <PushButton className="w-[292px]" label="Cloud" />
                <PushButton className="w-[292px]" label="Mesh" />
              </div>

              <div className="mt-[42px] ml-[21px] flex h-[49px] w-[643px] items-start border border-t-[#8e8e8e] border-r-[#b0b0b0] border-b-2 border-l-[#b0b0b0] border-b-[#b0b0b0] pt-[9px] pl-px">
                <div className="w-[220px] pt-[2px] tracking-[-0.07px]">Export statistics:</div>
                <Check className="w-[214px]" label="height" checked />
                <Check label="scalar fields" disabled />
              </div>

              <div className="mt-[33px] ml-[21px] h-[199px] w-[643px] border border-t-[#8e8e8e] border-r-[#b0b0b0] border-b-2 border-l-[#b0b0b0] border-b-[#b0b0b0] pt-[9px] pl-[13px]">
                <div className="flex h-10 items-center">
                  <Check className="w-[212px]" label="population" checked />
                  <Check className="w-[210px]" label="average" />
                  <Check label="unique val." />
                </div>
                <div className="flex h-10 items-center">
                  <Check className="w-[212px]" label="min" />
                  <Check label="std. dev." />
                </div>
                <div className="flex h-10 items-center">
                  <Check className="w-[212px]" label="max" />
                  <Check label="median" />
                </div>
                <div className="flex h-14 items-center">
                  <Check className="w-[212px]" label="range" />
                  <Check className="w-[214px]" label="percentile" />
                  <div className="flex h-9 w-[152px] items-center border-2 border-[#efefef] border-b-[#cfcfcf] bg-white text-[#bdbdbd]">50.00%</div>
                  <Stepper className="-mt-[2px] ml-[5px] h-10 w-[26px]" disabled />
                </div>
              </div>

              <div className="mt-[23px] ml-[21px] h-[3px] w-[643px] border-t border-t-[#c0c0c0] bg-white" />

              <div className="mt-[39px] ml-[35px] flex gap-8">
                <PushButton className="w-[184px]" label="Raster" />
                <PushButton className="w-[184px]" label="Image" />
                <PushButton className="w-[184px]" label="Matrix" />
              </div>
            </div>
          </div>

          {/* preview column */}
          <div className="ml-6 w-[1024px]">
            <div className="flex h-[79px] items-end justify-center pb-[7px]">
              <div className="tracking-[0px]">
                <span className="font-bold tracking-[0.3px]">Reference_GroundTruth</span> (2,055,093 points - 41,121 non-empty cells)
              </div>
            </div>
            <div className="h-[1544px] bg-white">
              <HeightMap />
            </div>
            <div className="mt-[42px] flex justify-end gap-8 pr-[2px]">
              <PushButton className="w-[134px]" label="Cancel" />
              <div className="flex h-10 w-[134px] items-center justify-center rounded-[10px] bg-linear-to-b from-[#2f93ff] to-[#007aff] text-white shadow-[0_1px_2px_rgba(0,90,220,0.35)]">OK</div>
            </div>
          </div>
        </div>
      </div>
    </div>
  );
}
